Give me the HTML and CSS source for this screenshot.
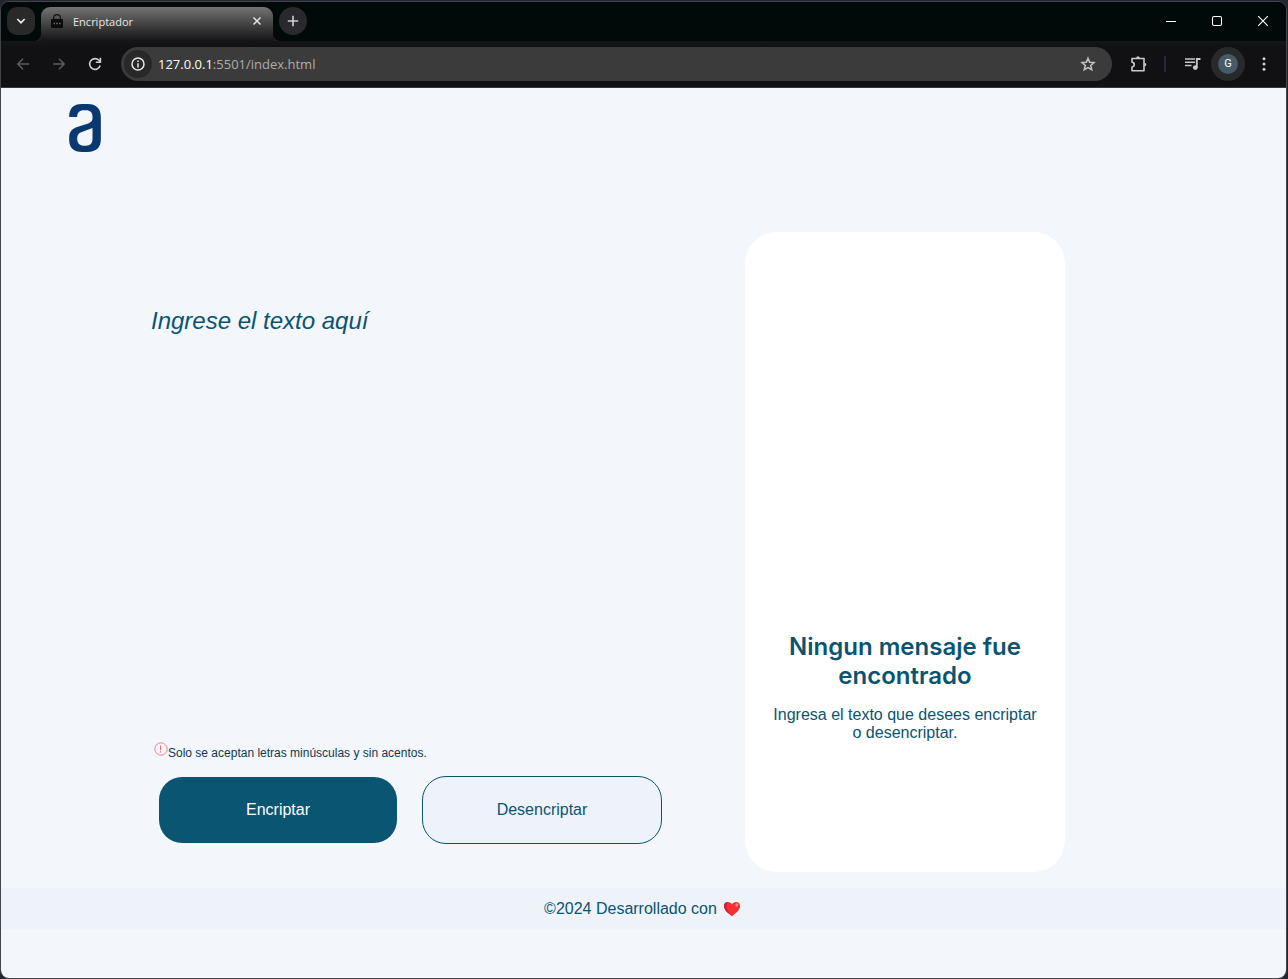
FILE: index.html
```
<!DOCTYPE html>
<html lang="es">
<head>
<meta charset="utf-8">
<meta name="viewport" content="width=device-width, initial-scale=1">
<title>Encriptador</title>
<link rel="stylesheet" href="styles.css">
</head>
<body>
<div class="window">
  <div class="tabstrip">
    <button class="tab-search" aria-label="Buscar pestañas">
      <svg width="14" height="14" viewBox="0 0 14 14" fill="none" stroke="#e8e8e8" stroke-width="1.7"><path d="M3.3 5l3.7 3.700L10.700 5"/></svg>
    </button>
    <div class="tab">
      <svg width="12" height="14" viewBox="0 0 12 14"><path d="M2.600 6V4a3.400 3.400 0 0 1 6.800 0v2" fill="none" stroke="#111" stroke-width="1.200"/><rect y="5" width="12" height="9" rx="1" fill="#0b0b0b"/><path d="M2.500 9.500h1.400M5.300 9.500h1.400M8.100 9.500h1.400" stroke="#777" stroke-width="1.300"/></svg>
      <span class="tab-title">Encriptador</span>
      <button class="plain" aria-label="Cerrar pestaña">
        <svg width="10" height="10" viewBox="0 0 10 10" stroke="#e4e4e4" stroke-width="1.5"><path d="M1.500 1.500l7 7M8.500 1.500l-7 7"/></svg>
      </button>
    </div>
    <button class="new-tab" aria-label="Nueva pestaña">
      <svg width="12" height="12" viewBox="0 0 12 12" stroke="#d0d0d4" stroke-width="1.6"><path d="M6 .8v10.4M.8 6h10.4"/></svg>
    </button>
    <div class="window-controls">
      <button class="plain" aria-label="Minimizar"><svg width="12" height="12" viewBox="0 0 12 12"><path d="M1 6.5h10" stroke="#fff"/></svg></button>
      <button class="plain" aria-label="Maximizar"><svg width="12" height="12" viewBox="0 0 12 12"><rect x="1.5" y="1.5" width="9" height="9" rx="1.5" fill="none" stroke="#fff" stroke-width="1.1"/></svg></button>
      <button class="plain" aria-label="Cerrar"><svg width="12" height="12" viewBox="0 0 12 12"><path d="M1.2 1.2l9.6 9.6M10.8 1.2l-9.6 9.6" stroke="#fff" stroke-width="1.1"/></svg></button>
    </div>
  </div>

  <div class="toolbar">
    <div class="nav">
      <button class="plain" aria-label="Atrás"><svg width="14" height="14" viewBox="0 0 14 14" fill="none" stroke="#5c5c5e" stroke-width="1.5"><path d="M13 7H2M7 1.8L1.8 7 7 12.2"/></svg></button>
      <button class="plain" aria-label="Adelante"><svg width="14" height="14" viewBox="0 0 14 14" fill="none" stroke="#5c5c5e" stroke-width="1.5"><path d="M1 7h11M7 1.8L12.2 7 7 12.2"/></svg></button>
      <button class="plain" aria-label="Recargar"><svg width="14" height="14" viewBox="0 0 14 14" fill="none" stroke="#cfcfcf" stroke-width="1.6"><path d="M12.200 8.600A5.400 5.400 0 1 1 11 3.300l1.300 1.400"/><path d="M12.400.8v4.500H7.800"/></svg></button>
    </div>
    <div class="address">
      <button class="site-info" aria-label="Información del sitio"><svg width="14" height="14" viewBox="0 0 14 14" fill="none" stroke="#e8e8e8" stroke-width="1.5"><circle cx="7" cy="7" r="6"/><path d="M7 6.2v4.2M7 3.4v1.5"/></svg></button>
      <span class="url"><span class="host">127.0.0.1</span>:5501/index.html</span>
      <button class="plain" aria-label="Marcador"><svg width="16" height="16" viewBox="0 0 16 16" fill="none" stroke="#c4c4c4" stroke-width="1.5"><path d="M8 2.200l1.700 4 4.300.4-3.300 2.900 1 4.200L8 11.500l-3.700 2.200 1-4.200L2 6.600l4.300-.4z"/></svg></button>
    </div>
    <div class="actions">
      <button class="plain" aria-label="Extensiones"><svg width="18" height="18" viewBox="0 0 18 18" fill="none" stroke="#cbcbcb" stroke-width="1.6"><path d="M2 3.500h12v12.200H2v-3.600c3-.6 3-4.400 0-5z" stroke-linejoin="round"/><path d="M6.300 3a1.700 1.700 0 0 1 3.400 0zM14.500 7.800a1.800 1.800 0 0 1 0 3.600z" fill="#cbcbcb" stroke="none"/></svg></button>
      <span class="divider"></span>
      <button class="plain" aria-label="Controles multimedia"><svg width="16" height="14" viewBox="0 0 16 14"><path d="M0 2h10M0 5.200h10M0 8.400h6.500" stroke="#c8c8c8" stroke-width="1.500"/><path d="M11.800 11V2H15.500" fill="none" stroke="#c8c8c8" stroke-width="1.800"/><circle cx="10.300" cy="10.600" r="2.400" fill="#c8c8c8"/></svg></button>
      <button class="profile" aria-label="Perfil"><span class="avatar">G</span></button>
      <button class="plain" aria-label="Menú"><svg width="4" height="14" viewBox="0 0 4 14" fill="#d0d0d0"><circle cx="2" cy="1.8" r="1.5"/><circle cx="2" cy="7" r="1.5"/><circle cx="2" cy="12.2" r="1.5"/></svg></button>
    </div>
  </div>

  <div class="page">
    <header class="header">
      <svg width="32" height="48" viewBox="57 42 95 144" role="img" aria-label="Logo">
        <path fill="#0a3871" fill-rule="evenodd" d="M57 81C57 56 69 42 95 42H112C139 42 152 56 152 82V148C152 173 138 186 112 186H96C70 186 57 173 57 150V144C57 126 64 117 81 111L112 101C123 97 127 93 127 84V80C127 68 120 61 108 61H101C88 61 81 68 81 81ZM127 114L93 127C84 131 81 136 81 146C81 160 89 167 102 167H107C120 167 127 160 127 147Z"/>
      </svg>
    </header>
    <main class="main">
      <section class="editor">
        <textarea class="message" placeholder="Ingrese el texto aquí" aria-label="Texto"></textarea>
        <p class="notice"><svg width="14" height="14" viewBox="0 0 14 14" fill="none" stroke="#ff6574"><circle cx="7" cy="7" r="6.200" stroke-width=".8"/><path d="M6.500 3.500v4.700M6.500 9.200v1.300"/></svg><span>Solo se aceptan letras minúsculas y sin acentos.</span></p>
        <div class="buttons">
          <button class="button primary">Encriptar</button>
          <button class="button secondary">Desencriptar</button>
        </div>
      </section>
      <aside class="card">
        <h1 class="card-title">Ningun mensaje fue encontrado</h1>
        <p class="card-text">Ingresa el texto que desees encriptar o desencriptar.</p>
      </aside>
    </main>
    <footer class="footer">
      <span>©2024 Desarrollado con</span>
      <svg width="18" height="16" viewBox="0 0 18 16"><path d="M9 15.300C5 12 1 9 1 5 1 2.500 2.700 1 4.900 1 6.800 1 8.300 2 9 3.500 9.700 2 11.200 1 13.100 1 15.300 1 17 2.500 17 5 17 9 13 12 9 15.300z" fill="#f92f33"/><path d="M9 15.300C5 12 1 9 1 5 1 2.500 2.700 1 4.900 1 2.200 3.500 3.500 10 9 15.300z" fill="#ca1d3c"/><ellipse cx="13.800" cy="4" rx="1.300" ry="1.800" fill="#ff8a83" transform="rotate(30 13.800 4)"/></svg>
    </footer>
  </div>
</div>
</body>
</html>
```
FILE: styles.css
```
* { box-sizing: border-box; }
body {
  margin: 0;
  min-height: 100vh;
  padding: 1px 1px 0 0;
  display: flex;
  background: #23252f;
  font-family: "Liberation Sans", Arial, sans-serif;
}
button { font-family: inherit; cursor: pointer; }
svg { display: block; flex: none; }
.window {
  flex: 1;
  min-width: 0;
  display: flex;
  flex-direction: column;
  border: 1px solid #43454b;
  border-radius: 9px;
  overflow: hidden;
  background: #111113;
}
.plain {
  display: flex;
  padding: 0;
  border: 0;
  background: none;
}
.tabstrip {
  display: flex;
  align-items: flex-start;
  height: 39px;
  padding: 5px 17px 0 6px;
  background: #020a09;
  font-family: "Open Sans", "Noto Sans", sans-serif;
}
.tab-search, .new-tab {
  display: flex;
  align-items: center;
  justify-content: center;
  width: 28px;
  height: 28px;
  padding: 0;
  border: 0;
  background: #29292a;
}
.tab-search { border-radius: 10px; }
.new-tab { margin-left: 6px; border-radius: 50%; background: #29292e; }
.tab {
  display: flex;
  align-items: center;
  gap: 10px;
  position: relative;
  width: 232px;
  height: 34px;
  margin-left: 6px;
  padding: 0 11px 6px 10px;
  border-radius: 9px 9px 0 0;
  background: linear-gradient(#737373, #141416);
  color: #e6e6e6;
  font-size: 11px;
}
.tab::before, .tab::after {
  content: "";
  position: absolute;
  bottom: 0;
  width: 8px;
  height: 8px;
}
.tab::before { right: 100%; background: radial-gradient(circle at 0 0, transparent 8px, #1c1c1e 8px); }
.tab::after { left: 100%; background: radial-gradient(circle at 100% 0, transparent 8px, #1c1c1e 8px); }
.tab-title { flex: 1; }
.window-controls {
  display: flex;
  gap: 34px;
  margin-left: auto;
  padding-top: 8px;
}
.toolbar {
  display: flex;
  align-items: center;
  height: 47px;
  padding: 0 20px 1px 15px;
  border-bottom: 1px solid #38383b;
  background: linear-gradient(#161618, #111113 6px);
}
.nav { display: flex; gap: 22px; }
.address {
  flex: 1;
  display: flex;
  align-items: center;
  height: 34px;
  margin-left: 19px;
  padding: 0 16px 0 3px;
  border-radius: 17px;
  background: #3b3b3b;
}
.site-info {
  display: flex;
  align-items: center;
  justify-content: center;
  width: 28px;
  height: 28px;
  padding: 0;
  border: 0;
  border-radius: 50%;
  background: #282828;
}
.url {
  flex: 1;
  margin-left: 6px;
  color: #adadad;
  font-family: "Open Sans", "Noto Sans", sans-serif;
  font-size: 13px;
}
.host { color: #fff; }
.actions { display: flex; align-items: center; margin-left: 18px; }
.divider { width: 2px; height: 16px; margin: 0 19px 0 16px; background: #292933; }
.profile {
  display: flex;
  align-items: center;
  justify-content: center;
  width: 34px;
  height: 34px;
  margin: 0 17px 0 10px;
  padding: 0;
  border: 0;
  border-radius: 50%;
  background: #28292a;
}
.avatar {
  width: 20px;
  height: 20px;
  border-radius: 50%;
  background: #455b67;
  color: #fff;
  font: 11px/20px Roboto, sans-serif;
  text-align: center;
}
.page {
  flex: 1;
  background: #f3f6fb;
  color: #0a5470;
}
.header { padding: 16px 68px 0; }
.main {
  display: flex;
  gap: 83px;
  padding: 80px 221px 16px 150px;
}
.editor {
  flex: 1;
  min-width: 0;
  display: flex;
  flex-direction: column;
  padding: 73px 0 28px;
}
.message {
  flex: 1;
  width: 100%;
  padding: 0;
  border: 0;
  outline: 0;
  resize: none;
  background: transparent;
  color: #0a5470;
  font: italic 24px/32px "Liberation Sans", Arial, sans-serif;
}
.message::placeholder { color: inherit; opacity: 1; }
.notice {
  display: flex;
  align-items: flex-start;
  margin: 0 0 16px;
  padding-left: 3px;
  color: #0b3a53;
  font-size: 12px;
  line-height: 14px;
}
.notice span { padding-top: 4px; }
.buttons { display: flex; gap: 24px; padding-left: 7px; }
.button {
  flex: 1;
  height: 68px;
  padding: 0;
  border-radius: 24px;
  font-size: 16px;
}
.primary {
  border: 1px solid transparent;
  background: #0a5572 padding-box;
  color: #fff;
}
.secondary {
  border: 1px solid #0a5572;
  background: #eef3fb;
  color: #0a5572;
}
.card {
  flex: 0 0 320px;
  min-height: 640px;
  padding: 400px 24px 128px;
  border-radius: 32px;
  background: #fff;
  text-align: center;
}
.card-title {
  margin: 0 0 16px;
  font: 600 24px/29px Inter, "Open Sans", sans-serif;
}
.card-text {
  margin: 0;
  font-size: 16px;
  line-height: 18px;
}
.footer {
  display: flex;
  align-items: center;
  justify-content: center;
  gap: 6px;
  padding: 12px 2px 11px 0;
  background: #eef3fa;
  font-size: 16px;
  line-height: 18px;
}
```
